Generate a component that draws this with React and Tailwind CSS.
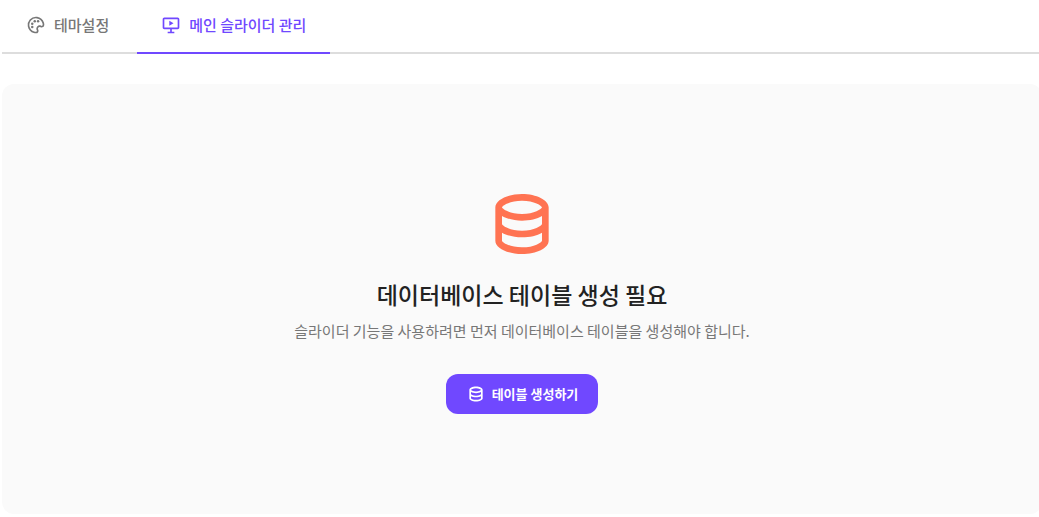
import { BiData, BiPalette, BiSlideshow } from "react-icons/bi";

const tabs = [
  { id: "theme", label: "테마설정", Icon: BiPalette },
  { id: "slider", label: "메인 슬라이더 관리", Icon: BiSlideshow },
];

function Tab({ label, Icon, active }) {
  const tone = active
    ? "border-[#7048ff] text-[#7048ff]"
    : "border-transparent text-[#777777]";
  return (
    <button
      type="button"
      role="tab"
      aria-selected={active}
      className={`-mb-0.5 flex h-[54px] items-center gap-2 border-b-2 px-6 pb-0.5 text-[15px] leading-6 font-medium ${tone}`}
    >
      <Icon className="size-5 shrink-0" aria-hidden="true" />
      {label}
    </button>
  );
}

export default function App() {
  return (
    <main className="overflow-x-hidden bg-white pl-0.5 font-['Noto_Sans_CJK_KR','Noto_Sans',sans-serif]">
      <div role="tablist" className="flex gap-1 border-b-2 border-[#dddddd]">
        {tabs.map((tab) => (
          <Tab key={tab.id} {...tab} active={tab.id === "slider"} />
        ))}
      </div>

      <section className="mt-[30px] -mr-[3px] flex flex-col items-center rounded-xl bg-[#fafafa] py-[100px] text-center">
        <BiData className="size-20 text-[#ff7352]" aria-hidden="true" />
        <h1 className="mt-3 text-[23px] leading-9 font-medium text-[#222222]">
          데이터베이스 테이블 생성 필요
        </h1>
        <p className="mt-[7px] text-[15px] leading-6 text-[#777777]">
          슬라이더 기능을 사용하려면 먼저 데이터베이스 테이블을 생성해야 합니다.
        </p>
        <button
          type="button"
          className="mt-[31px] flex h-10 items-center gap-1.5 rounded-xl bg-[#7048ff] px-5 text-[13px] leading-5 font-bold text-white"
        >
          <BiData className="size-5" aria-hidden="true" />
          테이블 생성하기
        </button>
      </section>
    </main>
  );
}
